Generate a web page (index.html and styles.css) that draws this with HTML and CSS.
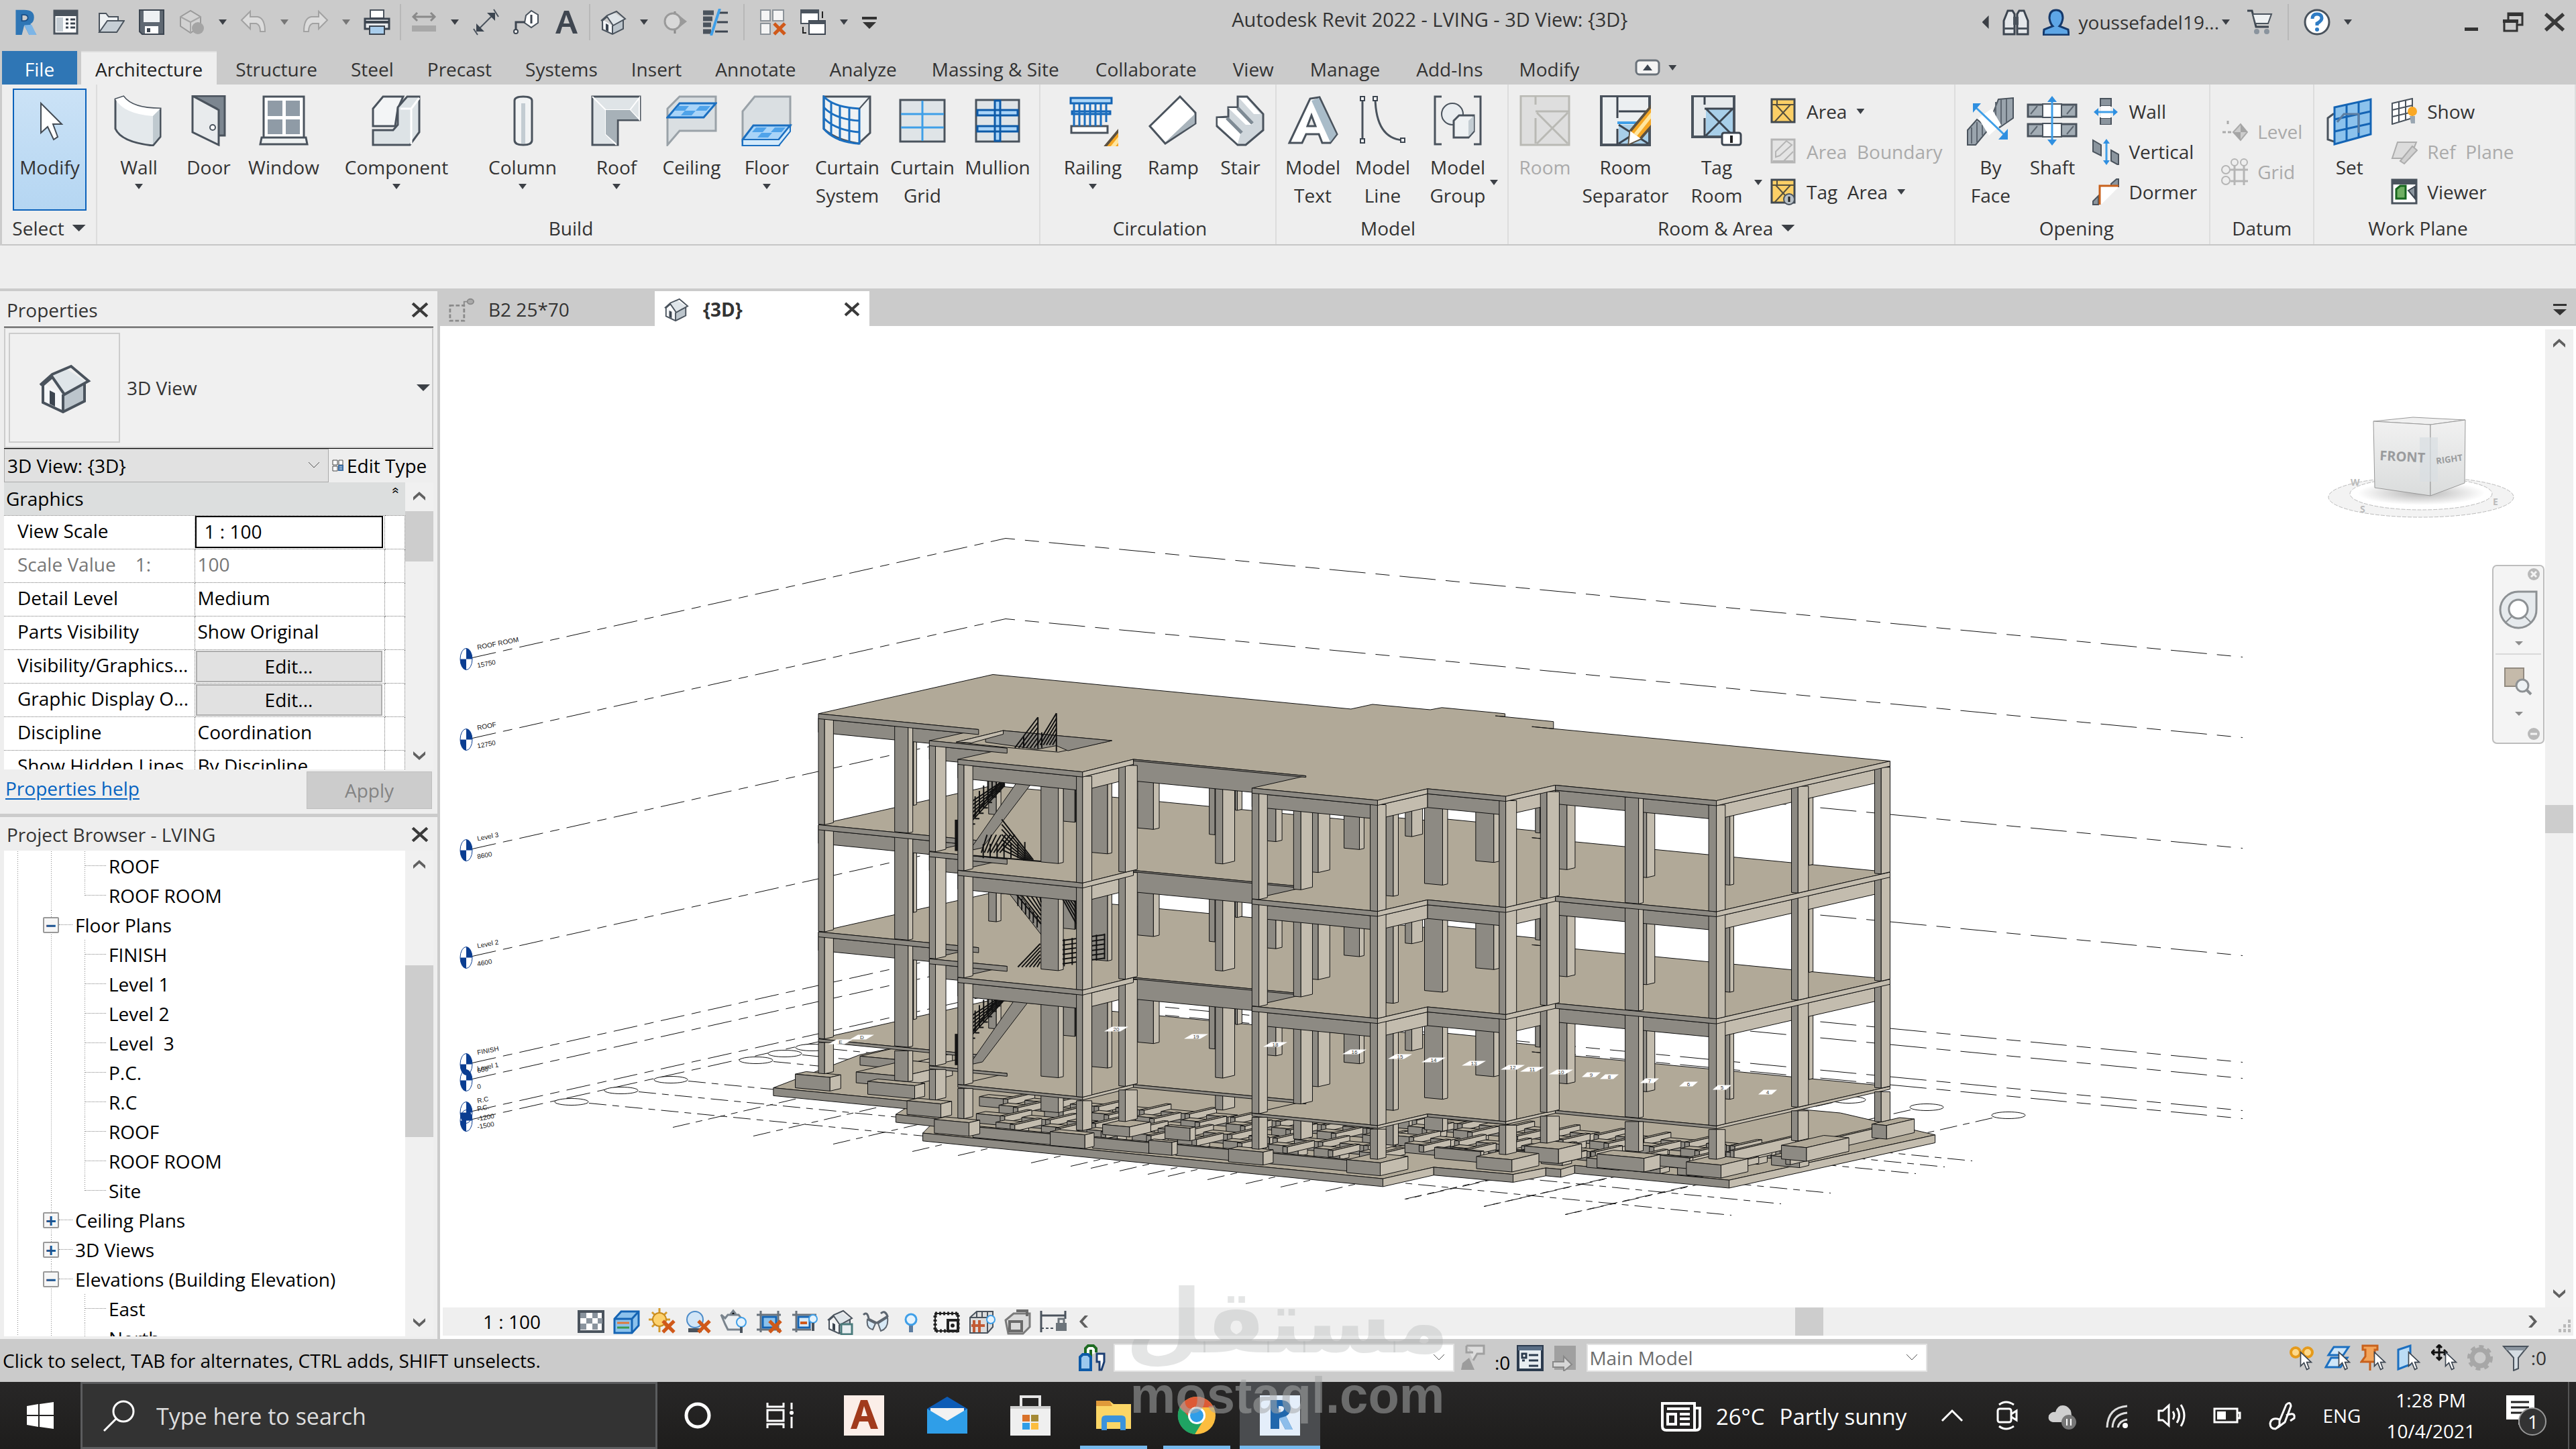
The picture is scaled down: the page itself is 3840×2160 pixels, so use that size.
FILE: index.html
```html
<!DOCTYPE html>
<html lang="en">
    <head>
        <meta charset="utf-8">
        <title>Autodesk Revit 2022 - LVING - 3D View: {3D}</title>
        <link rel="stylesheet" href="styles.css">
    </head>
    <body>
        <svg class="sprite" aria-hidden="true">
            <symbol id="house" viewBox="0 0 40 40">
                <path d="M5 17 19 25V37L6 31Z" fill="#f4f6f8"/><path d="M19 25 35 17V30L19 37Z" fill="#bcc5cc"/>
                <path d="M2 18 12 9 20 5 37 16 20 25 12 11 4 19Z" fill="#dfe5e9"/>
                <path d="M2 18 11 10 25 4 38 15 20 25 11 12 4 18V31L19 38 35 30V17M19 25V38" fill="none" stroke="#4a535d" stroke-width="2"/>
                <path d="M9 22 13 24V34L9 32Z" fill="#3c4550"/>
            </symbol>
            <symbol id="pencil" viewBox="0 0 40 40">
                <path d="M28 3 37 9 15 34 6 38 7 28Z" fill="#f5a623" stroke="#5b5142" stroke-width="2"/><path d="M31 6 11 31" stroke="#ffe6a0" stroke-width="3"/><path d="M28 3 37 9 33 14 24 8Z" fill="#c9651b"/><path d="M7 28 15 34 6 38Z" fill="#fff"/>
            </symbol>
            <symbol id="cross-x" viewBox="0 0 20 20"><path d="M2 2 18 18M18 2 2 18" stroke="#d0591a" stroke-width="5"/></symbol>
            <symbol id="chev-up" viewBox="0 0 24 24"><path d="M3 14 12 6 21 14V19L12 11 3 19Z" fill="#606060"/></symbol>
            <symbol id="close" viewBox="0 0 24 24"><path d="M2 3 22 21M22 3 2 21" stroke="#3a3a3a" stroke-width="4"/></symbol>
            <symbol id="pointer" viewBox="0 0 24 36"><path d="M3 2V27L9 21 14 33 18 31 14 20H22Z" fill="#fff" stroke="#3c4550" stroke-width="2"/></symbol>
            <symbol id="area" viewBox="0 0 40 40"><path d="M2 2H36V36H2Z" fill="#fbcf66" stroke="#3f4852" stroke-width="3"/><path d="M10 2V10M2 10H36M6 36 30 10M8 10 32 36" fill="none" stroke="#55503f" stroke-width="2"/></symbol>
        </svg>

        <header class="titlebar">
            <div class="quick">
                <svg class="ico" viewBox="0 0 40 44"><path d="M4 2H18Q34 2 34 14 34 22 28 25L38 43H26L18 27 14 43H4Z" fill="#2f76b5"/><path d="M14 10H18Q24 10 24 15 24 19 18 20H14Z" fill="#cbcbcb" stroke="#1c4f86" stroke-width="2"/><path d="M18 27 26 43H38L30 26Z" fill="#7db5e6"/></svg>
                <svg class="ico gap-r" viewBox="0 0 40 40"><path d="M3 3H37V37H3Z" fill="#fff" stroke="#4a535d" stroke-width="3"/><path d="M3 3H37V11H3Z" fill="#4a535d"/><path d="M6 13H16V34H6Z" fill="#c4ccd3"/><path d="M20 16H24M20 22H24M20 28H24M27 16H34M27 22H34M27 28H34" stroke="#3c4550" stroke-width="3"/></svg>
                <svg class="ico" viewBox="0 0 40 40"><path d="M2 35V7H12L16 12H30V18" fill="#eef1f3" stroke="#4a535d" stroke-width="2"/><path d="M2 35 14 18H39L28 35Z" fill="#c6ced5" stroke="#4a535d" stroke-width="2"/></svg>
                <svg class="ico" viewBox="0 0 40 40"><path d="M2 2H38V38H6L2 34Z" fill="#5f6872" stroke="#3c4550" stroke-width="2"/><path d="M8 3H32V20H8Z" fill="#eef1f3"/><path d="M10 26H30V37H10Z" fill="#fff"/><path d="M13 29H18V35H13Z" fill="#3c4550"/></svg>
                <svg class="ico" viewBox="0 0 40 40"><path d="M3 12 18 3 33 12V26L18 36 3 26Z" fill="#d2d2d2" stroke="#9a9a9a" stroke-width="2"/><path d="M3 12 18 20 33 12M18 20V36" fill="none" stroke="#a6a6a6" stroke-width="2"/><circle cx="29" cy="29" r="9" fill="#a4a4a4"/></svg>
                <i class="caret"></i>
                <svg class="ico" viewBox="0 0 40 40"><path d="M2 17 15 4V12H26Q37 14 37 34H30Q30 24 24 22H15V30Z" fill="#dcdcdc" stroke="#a2a2a2" stroke-width="2"/></svg>
                <i class="caret dim"></i>
                <svg class="ico" viewBox="0 0 40 40"><path d="M38 17 25 4V12H14Q3 14 3 34H10Q10 24 16 22H25V30Z" fill="#dcdcdc" stroke="#a2a2a2" stroke-width="2"/></svg>
                <i class="caret dim"></i>
                <svg class="ico" viewBox="0 0 40 40"><path d="M10 2H30V14H10Z" fill="#fff" stroke="#4a535d" stroke-width="2"/><path d="M2 15H38V30H2Z" fill="#e6e9ec" stroke="#3c4550" stroke-width="3"/><path d="M3 18H37V22H3Z" fill="#3c4550"/><path d="M9 26H31V38H9Z" fill="#a9cdec" stroke="#3c4550" stroke-width="2"/></svg>
                <i class="sep"></i>
                <svg class="ico" viewBox="0 0 40 40"><path d="M4 12H36M10 6 4 12 10 18M30 6 36 12 30 18" fill="none" stroke="#8a8a8a" stroke-width="3"/><path d="M2 25H38V34H2Z" fill="#a8a8a8"/></svg>
                <i class="caret"></i>
                <svg class="ico" viewBox="0 0 40 40"><path d="M8 32 32 8M2 30 8 39M32 1 39 12" stroke="#4a535d" stroke-width="2"/><path d="M6 34V22L18 34ZM34 6V18L22 6Z" fill="#3c4550"/></svg>
                <svg class="ico" viewBox="0 0 40 40"><path d="M20 10 28 3 38 9V21L28 28 18 21Z" fill="#fff" stroke="#4a535d" stroke-width="2"/><path d="M28 9V22M18 20H5V34" fill="none" stroke="#3c4550" stroke-width="3"/><circle cx="5" cy="34" r="3" fill="#fff" stroke="#3c4550" stroke-width="2"/></svg>
                <svg class="ico" viewBox="0 0 40 40"><path d="M4 37 17 3H24L37 37H30L26 27H14L11 37ZM16 22H25L20 9Z" fill="#3f4650"/></svg>
                <i class="sep"></i>
                <svg class="ico"><use href="#house"/></svg>
                <i class="caret"></i>
                <svg class="ico" viewBox="0 0 40 40"><path d="M20 4V37" stroke="#8a8a8a" stroke-width="3"/><path d="M20 5 38 19 20 33Z" fill="#9a9a9a"/><circle cx="17" cy="19" r="12" fill="#d8d8d8" stroke="#9a9a9a" stroke-width="3"/></svg>
                <svg class="ico" viewBox="0 0 40 40"><path d="M2 6H18M2 15H16M2 24H14M2 34H14" stroke="#4a535d" stroke-width="7"/><path d="M26 6H39M23 20H39M20 34H39" stroke="#3c4550" stroke-width="3"/><path d="M27 0 14 40" stroke="#3f9fe8" stroke-width="4"/></svg>
                <i class="sep last"></i>
                <svg class="ico" viewBox="0 0 40 40"><path d="M2 2H16V18H2ZM20 2H36V18H20ZM2 22H16V38H2Z" fill="#f5f5f5" stroke="#8c9399" stroke-width="2"/><svg x="20" y="20" width="20" height="20"><use href="#cross-x"/></svg></svg>
                <svg class="ico" viewBox="0 0 40 40"><path d="M2 2H28V22H2Z" fill="#fff" stroke="#4a535d" stroke-width="2"/><path d="M14 18H38V38H14Z" fill="#fff" stroke="#3c4550" stroke-width="2"/><path d="M2 2H28V7H2ZM14 18H38V23H14Z" fill="#4a535d"/><path d="M34 4V14M5 27V36H10" fill="none" stroke="#222" stroke-width="2"/></svg>
                <i class="caret"></i>
                <svg class="ico sm" viewBox="0 0 24 24"><path d="M1 4H23V8H1ZM2 12H22L12 22Z" fill="#333"/></svg>
            </div>
            <h1 class="title">Autodesk Revit 2022 - LVING - 3D View: {3D}</h1>
            <div class="account">
                <i class="caret left"></i>
                <svg class="ico" viewBox="0 0 40 40"><path d="M8 3H15L18 8V38H2V18ZM25 3H32L38 18V38H22V8Z" fill="#e4e7ea" stroke="#3c4550" stroke-width="3"/><path d="M16 12H24V24H16ZM2 28H18V31H2ZM22 28H38V31H22Z" fill="#4a535d"/></svg>
                <svg class="ico" viewBox="0 0 40 40"><path d="M20 2Q30 2 30 14 29 22 25 26L38 31 39 39H1L2 31 15 26Q11 22 10 14 10 2 20 2Z" fill="#5ea6e6" stroke="#15396b" stroke-width="3"/></svg>
                <span class="user">youssefadel19...</span><i class="caret tight"></i>
                <svg class="ico" viewBox="0 0 40 40"><path d="M2 3H9L15 27H34" fill="none" stroke="#3c4550" stroke-width="3"/><path d="M10 8H38L33 22H14Z" fill="#eef1f3" stroke="#4a535d" stroke-width="2"/><circle cx="16" cy="34" r="4" fill="#8a949e"/><circle cx="31" cy="34" r="4" fill="#8a949e"/></svg>
                <i class="sep wide"></i>
                <svg class="ico" viewBox="0 0 40 40"><circle cx="20" cy="20" r="18" fill="#fff" stroke="#4a535d" stroke-width="3"/><path d="M13 15Q13 8 20 8 27 8 27 14 27 18 20 22V25" fill="none" stroke="#2f7cc4" stroke-width="5"/><circle cx="20" cy="31" r="3" fill="#2f7cc4"/></svg>
                <i class="caret"></i>
            </div>
            <div class="winbtns">
                <button aria-label="Minimize"><svg viewBox="0 0 32 32"><path d="M6 24H26V29H6Z" fill="#333"/></svg></button>
                <button aria-label="Restore"><svg viewBox="0 0 32 32"><path d="M9 12V3H30V20H23" fill="none" stroke="#333" stroke-width="3"/><path d="M9 2H31V7H9ZM1 12H24V17H1Z" fill="#333"/><path d="M3 14H22V29H3Z" fill="none" stroke="#333" stroke-width="3"/></svg></button>
                <button aria-label="Close"><svg viewBox="0 0 24 24"><use href="#close"/></svg></button>
            </div>
        </header>

        <nav class="menu">
            <button class="file">File</button>
            <button class="active">Architecture</button>
            <button>Structure</button>
            <button>Steel</button>
            <button>Precast</button>
            <button>Systems</button>
            <button>Insert</button>
            <button>Annotate</button>
            <button>Analyze</button>
            <button>Massing &amp; Site</button>
            <button>Collaborate</button>
            <button>View</button>
            <button>Manage</button>
            <button>Add-Ins</button>
            <button>Modify</button>
            <button class="toggle" aria-label="Ribbon state"><svg viewBox="0 0 38 26"><rect x="2" y="2" width="34" height="21" rx="5" fill="#f4f4f4" stroke="#6a727a" stroke-width="3"/><path d="M12 17H26L19 8Z" fill="#3c4550"/></svg><i class="caret"></i></button>
        </nav>

        <section class="ribbon">
            <div class="panel">
                <div class="tools">
                    <button class="tool modify"><svg viewBox="0 0 76 76"><path d="M25 12V56L35 47 44 66 50 62 43 43H56Z" fill="#fff" stroke="#444c55" stroke-width="2"/></svg>Modify</button>
                </div>
                <h2>Select <i class="caret big"></i></h2>
            </div>
            <div class="panel build">
                <div class="tools">
                    <button class="tool w104"><svg viewBox="0 0 76 76"><path d="M3 6 15 2Q28 20 70 20V62L59 75Q12 70 3 50Z" fill="#e4e9ec" stroke="#4a535d" stroke-width="3"/><path d="M3 6 15 2Q28 20 70 20L59 31Q16 28 3 6Z" fill="#fff"/><path d="M59 31V73L69 61V21Z" fill="#bfc9cf"/></svg>Wall<i class="caret"></i></button>
                    <button class="tool w104"><svg viewBox="0 0 76 76"><path d="M14 1H62V60H50V20Z" fill="#7c8690" stroke="#4a535d" stroke-width="3"/><path d="M14 1 53 22V74L14 55Z" fill="#e8ebed" stroke="#4a535d" stroke-width="3"/><circle cx="44" cy="48" r="4" fill="#fff" stroke="#4a535d" stroke-width="2"/></svg>Door</button>
                    <button class="tool w120"><svg viewBox="0 0 76 76"><path d="M8 2H68V64H8Z" fill="#fff" stroke="#4a535d" stroke-width="3"/><path d="M14 8H36V31H14ZM41 8H62V31H41ZM14 36H36V58H14ZM41 36H62V58H41Z" fill="#8f9ba6"/><path d="M5 63H71L73 73H3Z" fill="#eef1f2" stroke="#4a535d" stroke-width="3"/></svg>Window</button>
                    <button class="tool w216"><svg viewBox="0 0 76 76"><path d="M3 20 18 2H48L40 20 36 46H3Z" fill="#f3f5f6" stroke="#4a535d" stroke-width="3"/><path d="M3 52H33L40 44V18L54 2H72V55L58 74H3Z" fill="#dde3e6" stroke="#4a535d" stroke-width="3"/><path d="M44 20H60L72 4M60 20V73" fill="none" stroke="#fff" stroke-width="3"/></svg>Component<i class="caret"></i></button>
                    <button class="tool w160"><svg viewBox="0 0 76 76"><path d="M26 8Q26 2 39 2 52 2 52 8V67Q52 74 39 74 26 74 26 67Z" fill="#f1f3f4" stroke="#4a535d" stroke-width="3"/><path d="M36 12H42V72H36Z" fill="#c3ccd2"/></svg>Column<i class="caret"></i></button>
                    <button class="tool w120"><svg viewBox="0 0 76 76"><path d="M2 2H73V37H40V74H2Z" fill="#dfe4e7" stroke="#4a535d" stroke-width="3"/><path d="M2 2 22 22V58L38 74M22 22H58L72 36V4L58 22" fill="none" stroke="#fff" stroke-width="2"/><path d="M22 22V58L38 72V36H71L58 22Z" fill="#a7b1b8"/></svg>Roof<i class="caret"></i></button>
                    <button class="tool w104"><svg viewBox="0 0 76 76"><path d="M2 20 20 2H74V53H20L2 74Z" fill="#dadfe2" stroke="#9aa2a8" stroke-width="3"/><path d="M20 12H74L56 33H2Z" fill="#a9d4f8" stroke="#1b6fc0" stroke-width="3"/><path d="M18 16H34L28 23H12ZM50 16H66L60 23H44ZM28 23H44L38 30H22Z" fill="#4fa3ea"/></svg>Ceiling</button>
                    <button class="tool w120"><svg viewBox="0 0 76 76"><path d="M2 24 20 2H73V46H20L2 66Z" fill="#dadfe2" stroke="#9aa2a8" stroke-width="3"/><path d="M18 45H73L56 66V75H2V66Z" fill="#a9d4f8" stroke="#1b6fc0" stroke-width="3"/><path d="M2 66H56L73 45V54L56 75H2Z" fill="#d3eafb" stroke="#1b6fc0" stroke-width="2"/><path d="M22 48H38L32 55H16ZM50 48H66L60 55H44ZM30 56H46L40 63H24Z" fill="#4fa3ea"/></svg>Floor<i class="caret"></i></button>
                    <button class="tool w120"><svg viewBox="0 0 76 76"><path d="M3 2H72V56L55 72Q20 66 3 50Z" fill="#eef2f4" stroke="#4a535d" stroke-width="3"/><path d="M3 2Q18 18 56 20V72Q20 70 3 50ZM14 10V60M27 16V68M41 19V71M3 18Q20 36 56 38M3 34Q20 52 56 55" fill="none" stroke="#1b6fc0" stroke-width="3"/><path d="M56 20 72 2" stroke="#4a535d" stroke-width="2"/></svg>Curtain<br>System</button>
                    <button class="tool w104"><svg viewBox="0 0 76 76"><path d="M5 7H71V69H5Z" fill="#dfe4e7" stroke="#4a535d" stroke-width="3"/><path d="M38 8V68M6 28H70M6 48H70" stroke="#3f9fe8" stroke-width="3"/></svg>Curtain<br>Grid</button>
                    <button class="tool w120"><svg viewBox="0 0 76 76"><path d="M6 7H70V69H6Z" fill="#dfe4e7" stroke="#4a535d" stroke-width="3"/><path d="M8 22H68V30H8ZM8 46H68V54H8ZM34 8H42V68H34Z" fill="#a9d4f8" stroke="#0d5aa8" stroke-width="3"/></svg>Mullion</button>
                </div>
                <h2>Build</h2>
            </div>
            <div class="panel circulation">
                <div class="tools">
                    <button class="tool w120"><svg viewBox="0 0 76 76"><path d="M6 46H60V56H6Z" fill="#fff" stroke="#4a535d" stroke-width="3"/><path d="M5 4H66V12H5ZM7 24H64V28H7Z" fill="#a9d4f8" stroke="#1464b4" stroke-width="3"/><path d="M10 12V46M18 12V46M26 12V46M34 12V46M42 12V46M50 12V46M58 12V40" stroke="#1b6fc0" stroke-width="3"/><svg x="34" y="34" width="40" height="42"><use href="#pencil"/></svg></svg>Railing<i class="caret"></i></button>
                    <button class="tool w120"><svg viewBox="0 0 76 76"><path d="M3 46 48 2 71 26V42L26 72Z" fill="#fff" stroke="#4a535d" stroke-width="3"/><path d="M26 70 70 28V42Z" fill="#a9b4bc"/></svg>Ramp</button>
                    <button class="tool w80"><svg viewBox="0 0 76 76"><path d="M3 33 20 32V18H34V2H48L72 28V52L46 74H34L3 46Z" fill="#d0d7dc" stroke="#4a535d" stroke-width="3"/><path d="M4 34H16L38 58 34 72 4 44ZM20 19H32L56 44H46ZM36 4H47L68 28H58Z" fill="#fff"/><path d="M18 34 40 56M34 19 56 42" stroke="#7e8a94" stroke-width="5"/></svg>Stair</button>
                </div>
                <h2>Circulation</h2>
            </div>
            <div class="panel model">
                <div class="tools">
                    <button class="tool w104"><svg viewBox="0 0 76 76"><path d="M3 71 34 5 48 3 74 58 64 71H52L47 58H28L22 71Z" fill="#fff" stroke="#4a535d" stroke-width="3"/><path d="M30 46H42L36 30Z" fill="#e8e8e8" stroke="#4a535d" stroke-width="3"/><path d="M36 8 47 4 73 58 64 70Z" fill="#a9bcc9"/></svg>Model<br>Text</button>
                    <button class="tool w104"><svg viewBox="0 0 76 76"><path d="M8 4V69M27 4Q28 64 68 67" fill="none" stroke="#4a535d" stroke-width="3"/><path d="M5 2H11V8H5ZM5 65H11V71H5ZM24 2H30V8H24ZM65 64H71V70H65Z" fill="#fff" stroke="#3c4550" stroke-width="2"/></svg>Model<br>Line</button>
                    <button class="tool w120"><svg viewBox="0 0 76 76"><path d="M14 2H4V73H14M62 2H72V73H62" fill="none" stroke="#4a535d" stroke-width="3"/><circle cx="30" cy="28" r="16" fill="#e9edf0" stroke="#4a535d" stroke-width="2"/><path d="M32 38 40 30H62V54L54 63H32Z" fill="#eef1f3" stroke="#4a535d" stroke-width="3"/><path d="M54 38V62L62 53V31Z" fill="#c3ccd2"/></svg>Model<i class="caret side"></i><br>Group</button>
                </div>
                <h2>Model</h2>
            </div>
            <div class="panel room">
                <div class="tools">
                    <button class="tool w104" disabled><svg viewBox="0 0 76 76"><path d="M2 1H74V74H2Z" fill="#dedede" stroke="#b9b9b4" stroke-width="3"/><path d="M24 2V14M24 34V72M24 24H74M26 26 72 72M72 26 26 72" fill="none" stroke="#b9b9b4" stroke-width="3"/></svg>Room</button>
                    <button class="tool w136"><svg viewBox="0 0 76 76"><path d="M2 1H74V74H2Z" fill="#eceff1" stroke="#4a535d" stroke-width="4"/><path d="M28 44H72V72H28Z" fill="#a8cfe9"/><path d="M26 2V34M26 50V74M28 24H74M28 44 72 72M72 44 28 72" stroke="#3c4550" stroke-width="3"/><path d="M26 41H74" stroke="#3f9fe8" stroke-width="4"/><svg x="32" y="0" width="44" height="42"><use href="#pencil"/></svg></svg>Room<br>Separator</button>
                    <button class="tool w136"><svg viewBox="0 0 76 76"><path d="M2 1H64V62H2Z" fill="#e6e9eb" stroke="#4a535d" stroke-width="4"/><path d="M22 20H62V60H22Z" fill="#a8cfe9"/><path d="M20 2V14M20 34V62M20 20H64M22 20 62 60M62 20 22 60" stroke="#3c4550" stroke-width="3"/><rect x="46" y="56" width="28" height="18" rx="3" fill="#fff" stroke="#3c4550" stroke-width="3"/><path d="M60 60V71" stroke="#222" stroke-width="4"/></svg>Tag<i class="caret side"></i><br>Room</button>
                    <div class="stack">
                        <button><svg viewBox="0 0 40 40"><use href="#area"/></svg>Area<i class="caret"></i></button>
                        <button disabled><svg viewBox="0 0 40 40"><path d="M2 2H36V36H2Z" fill="#e4e4e4" stroke="#b5b5b5" stroke-width="3"/><path d="M8 20 24 4 32 10 14 26 8 28ZM4 34H34M18 36 34 20" fill="none" stroke="#b5b5b5" stroke-width="2"/></svg>Area&nbsp; Boundary</button>
                        <button><svg viewBox="0 0 40 40"><use href="#area"/><circle cx="28" cy="31" r="8" fill="#b7bfc6" stroke="#4a535d" stroke-width="2"/><path d="M28 27V35" stroke="#222" stroke-width="3"/></svg>Tag&nbsp; Area<i class="caret"></i></button>
                    </div>
                </div>
                <h2>Room &amp; Area <i class="caret big"></i></h2>
            </div>
            <div class="panel opening">
                <div class="tools">
                    <button class="tool w104"><svg viewBox="0 0 76 76"><path d="M50 6 72 4V34L52 48 40 32ZM4 52 18 36 36 50 16 74H4Z" fill="#9aa4ad" stroke="#4a535d" stroke-width="2"/><path d="M46 10V38M54 6V44M62 6V40M10 48V72M18 40V70M26 44V60" stroke="#5d6670" stroke-width="2"/><path d="M20 34 40 20 54 44 36 60Z" fill="#fff"/><path d="M14 16 60 60" stroke="#3f9fe8" stroke-width="3"/><path d="M12 12H24L12 26ZM64 66H50L64 50Z" fill="#2f8fe0"/></svg>By<br>Face</button>
                    <button class="tool w80"><svg viewBox="0 0 76 76"><path d="M2 14H74V32H2ZM2 43H74V61H2Z" fill="#a3adb5" stroke="#4a535d" stroke-width="3"/><path d="M24 13H52V33H24ZM24 42H52V62H24Z" fill="#fff" stroke="#4a535d" stroke-width="2"/><path d="M38 6V70" stroke="#3f9fe8" stroke-width="3"/><path d="M31 10 38 1 45 10ZM31 66 38 75 45 66Z" fill="#2f8fe0"/><path d="M6 28 16 16M60 28 70 16M6 58 16 46M60 58 70 46" stroke="#5d6670" stroke-width="2"/></svg>Shaft</button>
                    <div class="stack">
                        <button><svg viewBox="0 0 40 40"><path d="M12 1H28V12H12ZM12 30H28V40H12Z" fill="#8b959e" stroke="#4a535d" stroke-width="2"/><path d="M13 12H27V30H13Z" fill="#fff"/><path d="M4 21H36" stroke="#3f9fe8" stroke-width="3"/><path d="M9 15 2 21 9 27ZM31 15 38 21 31 27Z" fill="#2f8fe0"/></svg>Wall</button>
                        <button><svg viewBox="0 0 40 40"><path d="M1 3 13 10V26L1 20ZM28 18 39 24V40L28 34Z" fill="#8b959e" stroke="#4a535d" stroke-width="2"/><path d="M21 4V36" stroke="#3f9fe8" stroke-width="3"/><path d="M16 8 21 1 26 8ZM16 33 21 40 26 33Z" fill="#2f8fe0"/></svg>Vertical</button>
                        <button><svg viewBox="0 0 40 40"><path d="M28 8 36 1H39V12H28ZM1 34 9 26V39H1Z" fill="#8b959e" stroke="#4a535d" stroke-width="2"/><path d="M14 38 38 14V12H12V38Z" fill="#fff"/><path d="M39 11H11V39" fill="none" stroke="#c8611c" stroke-width="3"/></svg>Dormer</button>
                    </div>
                </div>
                <h2>Opening</h2>
            </div>
            <div class="panel datum">
                <div class="tools">
                    <div class="stack">
                        <button disabled><svg viewBox="0 0 40 40"><path d="M10 4V12M2 21H24" stroke="#aaa" stroke-width="3" stroke-dasharray="5 3"/><path d="M18 21 29 9 39 21 29 33Z" fill="#ccc" stroke="#aaa" stroke-width="2"/><path d="M29 9 39 21H29V33L18 21H29Z" fill="#a5a5a5"/></svg>Level</button>
                        <button disabled><svg viewBox="0 0 40 40"><path d="M14 17H40M14 34H40M20 8V40M34 8V40" stroke="#b5b5b5" stroke-width="3"/><g fill="#eee" stroke="#b5b5b5" stroke-width="2"><circle cx="20" cy="6" r="5"/><circle cx="34" cy="6" r="5"/><circle cx="7" cy="17" r="6"/><circle cx="7" cy="33" r="6"/></g></svg>Grid</button>
                    </div>
                </div>
                <h2>Datum</h2>
            </div>
            <div class="panel workplane">
                <div class="tools">
                    <button class="tool w104"><svg viewBox="0 0 76 76"><path d="M6 34 14 28H50V60L18 70 6 66Z" fill="#eef1f3" stroke="#4a535d" stroke-width="3"/><path d="M16 18 70 6V58L16 73Z" fill="#8cc2ec" stroke="#1464b4" stroke-width="3"/><path d="M34 14V68M52 10V63M16 36 70 24M16 54 70 42" stroke="#1464b4" stroke-width="3"/><path d="M20 40 30 28H52V56" fill="none" stroke="#5c7da0" stroke-width="3"/></svg>Set</button>
                    <div class="stack">
                        <button><svg viewBox="0 0 40 40"><path d="M2 8 32 1V30L2 39ZM12 6V36M22 4V33M2 18 32 11M2 28 32 21" fill="#fff" stroke="#4a535d" stroke-width="2"/><circle cx="32" cy="20" r="7" fill="#f9a825"/><path d="M28 27H36V38H30Z" fill="#9aa7b2"/></svg>Show</button>
                        <button disabled><svg viewBox="0 0 40 40"><path d="M10 6H38L28 30H2Z" fill="#dcdcdc" stroke="#adadad" stroke-width="2"/><path d="M14 34 32 12 39 18 20 38Z" fill="#d0d0d0" stroke="#adadad" stroke-width="2"/></svg>Ref&nbsp; Plane</button>
                        <button><svg viewBox="0 0 40 40"><path d="M2 2H38V37H2Z" fill="#fff" stroke="#4a535d" stroke-width="3"/><path d="M2 2H38V9H2Z" fill="#4a535d"/><path d="M8 16 14 11H22V30H8Z" fill="#6fae62" stroke="#17661e" stroke-width="3"/><path d="M26 18 36 12V30Z" fill="#8b959e" stroke="#3c4550" stroke-width="2"/></svg>Viewer</button>
                    </div>
                </div>
                <h2>Work Plane</h2>
            </div>
        </section>
        <div class="options"></div>

        <main class="workspace">
            <aside class="dock">
                <section class="pane">
                    <header><h2>Properties</h2><button aria-label="Close properties"><svg viewBox="0 0 24 24"><use href="#close"/></svg></button></header>
                    <button class="type">
                        <span class="thumb"><svg viewBox="0 0 40 40"><use href="#house"/></svg></span>
                        <span>3D View</span>
                        <i class="caret wide"></i>
                    </button>
                    <div class="instance">
                        <select aria-label="Instance"><option>3D View: {3D}</option></select>
                        <button><svg viewBox="0 0 18 18"><path d="M1 1H8V8H1ZM10 1H16V8H10ZM1 10H8V17H1Z" fill="#fff" stroke="#444" stroke-width="1"/><path d="M9 8H17V17H9Z" fill="#3b6ea5"/><path d="M11 11H15M11 14H15" stroke="#fff" stroke-width="1"/></svg>Edit Type</button>
                    </div>
                    <div class="scrolled">
                        <div class="clip">
                            <table class="props">
                                <tr class="group"><th colspan="3">Graphics<span>&#xAB;</span></th></tr>
                                <tr><th><label for="scale">View Scale</label></th><td><input id="scale" value="1 : 100"></td><td></td></tr>
                                <tr class="off"><th>Scale Value &nbsp;&nbsp; 1:</th><td>100</td><td></td></tr>
                                <tr><th>Detail Level</th><td>Medium</td><td></td></tr>
                                <tr><th>Parts Visibility</th><td>Show Original</td><td></td></tr>
                                <tr><th>Visibility/Graphics...</th><td><button>Edit...</button></td><td></td></tr>
                                <tr><th>Graphic Display O...</th><td><button>Edit...</button></td><td></td></tr>
                                <tr><th>Discipline</th><td>Coordination</td><td></td></tr>
                                <tr><th>Show Hidden Lines</th><td>By Discipline</td><td></td></tr>
                            </table>
                        </div>
                        <div class="vscroll"><svg viewBox="0 0 24 24"><use href="#chev-up"/></svg><i class="bar bar-props"></i><svg class="down" viewBox="0 0 24 24"><use href="#chev-up"/></svg></div>
                    </div>
                    <footer><a href="#">Properties help</a><button disabled>Apply</button></footer>
                </section>
                <section class="pane browser">
                    <header><h2>Project Browser - LVING</h2><button aria-label="Close browser"><svg viewBox="0 0 24 24"><use href="#close"/></svg></button></header>
                    <div class="scrolled">
                        <div class="clip">
                            <ul class="tree">
                                <li><ul>
                                    <li><ul>
                                        <li><span>ROOF</span></li>
                                        <li><span>ROOF ROOM</span></li>
                                    </ul></li>
                                    <li><span><button aria-label="Collapse">&minus;</button>Floor Plans</span><ul>
                                        <li><span>FINISH</span></li>
                                        <li><span>Level 1</span></li>
                                        <li><span>Level 2</span></li>
                                        <li><span>Level&nbsp; 3</span></li>
                                        <li><span>P.C.</span></li>
                                        <li><span>R.C</span></li>
                                        <li><span>ROOF</span></li>
                                        <li><span>ROOF ROOM</span></li>
                                        <li><span>Site</span></li>
                                    </ul></li>
                                    <li><span><button aria-label="Expand">+</button>Ceiling Plans</span></li>
                                    <li><span><button aria-label="Expand">+</button>3D Views</span></li>
                                    <li><span><button aria-label="Collapse">&minus;</button>Elevations (Building Elevation)</span><ul>
                                        <li><span>East</span></li>
                                        <li><span>North</span></li>
                                    </ul></li>
                                </ul></li>
                            </ul>
                        </div>
                        <div class="vscroll"><svg viewBox="0 0 24 24"><use href="#chev-up"/></svg><i class="bar bar-tree"></i><svg class="down" viewBox="0 0 24 24"><use href="#chev-up"/></svg></div>
                    </div>
                </section>
            </aside>

            <section class="view">
                <div class="doctabs">
                    <button class="doctab"><svg viewBox="0 0 40 40"><path d="M2 14H24V38H2Z" fill="none" stroke="#8a8a8a" stroke-width="3" stroke-dasharray="6 3"/><path d="M24 14V8H30" fill="none" stroke="#8a8a8a" stroke-width="2"/><ellipse cx="34" cy="8" rx="5" ry="4" fill="#aaa" stroke="#8a8a8a" stroke-width="2"/></svg>B2 25*70</button>
                    <button class="doctab current"><svg viewBox="0 0 40 40"><use href="#house"/></svg>{3D}<svg class="x" viewBox="0 0 24 24"><use href="#close"/></svg></button>
                    <svg class="more" viewBox="0 0 24 24"><path d="M2 3H22V6H2ZM2 11H22L12 20Z" fill="#333"/></svg>
                </div>
                <div class="stage">
                    <div class="canvas">
                        <svg id="model" viewBox="656 486 3138 1462" role="img" aria-label="3D view of the building"></svg>
                        <svg class="cube" viewBox="3465 610 290 170">
                            <defs>
                                <linearGradient id="face" x2="0" y2="1"><stop stop-color="#f1f1f1"/><stop offset="1" stop-color="#dadcdc"/></linearGradient>
                                <radialGradient id="shade"><stop stop-color="#b5b5b5"/><stop offset="1" stop-color="#fff"/></radialGradient>
                            </defs>
                            <ellipse cx="3609" cy="741" rx="138" ry="30" fill="#f3f3f3" stroke="#bbb" stroke-dasharray="6 2"/>
                            <ellipse cx="3609" cy="736" rx="106" ry="24" fill="#fff" stroke="#bbb" stroke-dasharray="6 2"/>
                            <ellipse cx="3609" cy="735" rx="95" ry="18" fill="url(#shade)"/>
                            <path d="M3538 628 3597 622 3675 626 3623 633Z" fill="#f0f0f0" stroke="#999"/>
                            <path d="M3538 628 3623 633V739L3540 727Z" fill="url(#face)" stroke="#999"/>
                            <path d="M3623 633 3675 626 3674 720 3623 739Z" fill="url(#face)" stroke="#999"/>
                            <path d="M3607 652H3634V718H3607Z" fill="#d9dee2" opacity=".7"/>
                            <g class="cubetext">
                                <text x="3547" y="686" transform="rotate(3 3547 686)">FRONT</text>
                                <text class="narrow" x="3632" y="692" transform="rotate(-8 3632 692)">RIGHT</text>
                                <text class="compass" x="3518" y="764">S</text><text class="compass" x="3716" y="753">E</text><text class="compass" x="3504" y="724">W</text>
                            </g>
                        </svg>
                        <svg class="navbar" viewBox="0 0 78 267">
                            <rect x="1" y="1" width="76" height="265" rx="6" fill="#f4f4f4" stroke="#bdbdbd" stroke-width="2"/>
                            <circle cx="62" cy="14" r="9" fill="#b9b9b9"/><path d="M58 10 66 18M66 10 58 18" stroke="#f4f4f4" stroke-width="3"/>
                            <path d="M39 40H66V66A27 27 0 1 1 39 40Z" fill="#e6eaed" stroke="#8d9194" stroke-width="3"/><circle cx="39" cy="66" r="14" fill="#fff" stroke="#8d9194" stroke-width="3"/><path d="M29 77 20 86M49 77 58 86" stroke="#8d9194" stroke-width="2"/>
                            <path d="M34 114H46L40 120ZM34 219H46L40 225Z" fill="#8d8d8d"/><path d="M5 133H73" stroke="#bdbdbd" stroke-width="1"/>
                            <path d="M19 154H47V181H19Z" fill="#c5baaa" stroke="#918a80" stroke-width="2"/><circle cx="45" cy="180" r="9" fill="#eef2f4" stroke="#8d9194" stroke-width="3"/><path d="M51 186 58 193" stroke="#8d9194" stroke-width="4"/>
                            <circle cx="62" cy="252" r="9" fill="#b9b9b9"/><path d="M57 252H67" stroke="#f4f4f4" stroke-width="3"/>
                        </svg>
                    </div>
                    <div class="vscroll"><svg viewBox="0 0 24 24"><use href="#chev-up"/></svg><i class="bar bar-view"></i><svg class="down" viewBox="0 0 24 24"><use href="#chev-up"/></svg></div>
                </div>
                <div class="viewbar">
                    <span class="ratio">1 : 100</span>
                    <svg class="ico" viewBox="0 0 40 40"><path d="M2 5H38V35H2Z" fill="#fff" stroke="#4a535d" stroke-width="4"/><path d="M4 7H13V15H4ZM22 7H30V15H22ZM13 15H22V23H13ZM30 15H37V23H30ZM4 23H13V32H4ZM22 23H30V32H22Z" fill="#8a949e"/></svg>
                    <svg class="ico" viewBox="0 0 40 40"><path d="M2 16 12 5H38V26L28 37H2Z" fill="#8cc2ec" stroke="#1464b4" stroke-width="3"/><path d="M2 16H28V37M28 16 38 5" fill="none" stroke="#1464b4" stroke-width="3"/><path d="M6 22H24" stroke="#e07b39" stroke-width="3"/><path d="M6 29H24" stroke="#3d9a50" stroke-width="3"/></svg>
                    <svg class="ico" viewBox="0 0 40 40"><path d="M16 0V36M0 17H32M5 6 27 28M27 6 5 28" stroke="#d59a2b" stroke-width="3"/><circle cx="16" cy="17" r="10" fill="#fdd26e" stroke="#c98b1d" stroke-width="2"/><svg x="19" y="17" width="21" height="21"><use href="#cross-x"/></svg></svg>
                    <svg class="ico" viewBox="0 0 40 40"><circle cx="16" cy="17" r="12" fill="#d2e6f7" stroke="#4d8cc9" stroke-width="2"/><path d="M6 33H26" stroke="#4a535d" stroke-width="6"/><svg x="19" y="17" width="21" height="21"><use href="#cross-x"/></svg></svg>
                    <svg class="ico" viewBox="0 0 40 40"><path d="M2 10 8 15 12 10H28L32 15V32H12L8 24Z" fill="#eef1f3" stroke="#7a848d" stroke-width="3"/><path d="M16 9 20 4 24 9" stroke="#7a848d" stroke-width="3"/><circle cx="32" cy="21" r="7" fill="#e5f3fd" stroke="#3f9fe8" stroke-width="2"/><path d="M32 28V37" stroke="#4a535d" stroke-width="4"/></svg>
                    <svg class="ico" viewBox="0 0 40 40"><path d="M8 4V36M2 10H38M34 4V36M2 32H38" stroke="#6a737c" stroke-width="3"/><path d="M11 13H31V29H11Z" fill="#8cc2ec" stroke="#1464b4" stroke-width="3"/><svg x="19" y="17" width="21" height="21"><use href="#cross-x"/></svg></svg>
                    <svg class="ico" viewBox="0 0 40 40"><path d="M8 4V36M2 10H38M2 32H30" stroke="#6a737c" stroke-width="3"/><path d="M11 13H28V29H11Z" fill="#d5e8f7" stroke="#1464b4" stroke-width="3"/><path d="M14 22H24" stroke="#d0591a" stroke-width="4"/><circle cx="33" cy="16" r="6" fill="#e5f3fd" stroke="#3f9fe8" stroke-width="2"/><path d="M33 22V34" stroke="#4a535d" stroke-width="4"/></svg>
                    <svg class="ico" viewBox="0 0 40 40"><use href="#house"/><path d="M22 24H38V39H22Z" fill="#e8eef1" stroke="#4a7b7c" stroke-width="3"/></svg>
                    <svg class="ico" viewBox="0 0 40 40"><path d="M2 10Q8 4 10 16L22 22 38 12Q34 2 28 8" fill="none" stroke="#5d6670" stroke-width="3"/><path d="M8 17 20 23 16 32Q6 30 8 17ZM24 23 38 14Q40 30 28 34Z" fill="#d7e9f6" stroke="#5d6670" stroke-width="2"/></svg>
                    <svg class="ico" viewBox="0 0 40 40"><circle cx="20" cy="17" r="8" fill="#e5f3fd" stroke="#3f9fe8" stroke-width="3"/><path d="M17 26H23V36H17Z" fill="#5d7da0"/></svg>
                    <svg class="ico" viewBox="0 0 40 40"><path d="M3 8H37V34H3Z" fill="#f4f4f4" stroke="#222" stroke-width="2"/><path d="M3 8H37V34H3Z" fill="none" stroke="#222" stroke-width="5" stroke-dasharray="3 3"/><path d="M22 18H37V34H22Z" fill="#fff" stroke="#222" stroke-width="4"/><circle cx="29" cy="26" r="3" fill="#222"/></svg>
                    <svg class="ico" viewBox="0 0 40 40"><path d="M2 14 12 5H36V28L28 37H2Z" fill="#ddd" stroke="#4a535d" stroke-width="2"/><path d="M8 18V36M16 18V36M4 26H24" stroke="#c25b35" stroke-width="4"/><path d="M12 5V15M20 5V15M28 5V15M2 14H28V37" fill="none" stroke="#4a535d" stroke-width="2"/><circle cx="33" cy="17" r="6" fill="#e5f3fd" stroke="#3f9fe8" stroke-width="2"/></svg>
                    <svg class="ico" viewBox="0 0 40 40"><path d="M2 18 14 8H38V28L28 38H6Z" fill="#d9d9d9" stroke="#7a7a7a" stroke-width="3"/><path d="M8 20H26V34H8ZM18 4H34V12" fill="none" stroke="#6a6a6a" stroke-width="4"/></svg>
                    <svg class="ico" viewBox="0 0 40 40"><path d="M2 4V36M38 4V16M2 11H38" stroke="#4a535d" stroke-width="3"/><path d="M2 30H22" stroke="#4a535d" stroke-width="2" stroke-dasharray="4 3"/><path d="M24 22H40V34H24Z" fill="#6c747b"/><path d="M28 22V16H36V22" fill="none" stroke="#6c747b" stroke-width="3"/></svg>
                    <div class="hscroll">
                        <svg class="back" viewBox="0 0 24 24"><use href="#chev-up"/></svg><i class="bar"></i><svg class="fwd" viewBox="0 0 24 24"><use href="#chev-up"/></svg>
                    </div>
                    <svg class="grip" viewBox="0 0 20 20"><path d="M15 0H19V5H15ZM8 7H12V12H8ZM15 7H19V12H15ZM1 14H5V19H1ZM8 14H12V19H8ZM15 14H19V19H15Z" fill="#b9b9b9"/></svg>
                </div>
            </section>
        </main>

        <div class="status">
            <p>Click to select, TAB for alternates, CTRL adds, SHIFT unselects.</p>
            <svg class="ico" viewBox="0 0 40 40"><path d="M10 20V6L14 2H22L26 6V12M18 8V20" fill="#fff" stroke="#1e6b22" stroke-width="4"/><path d="M2 19 6 15H14L18 19V38H2Z" fill="#9cc8ee" stroke="#0d5aa8" stroke-width="4"/><path d="M27 14H38V26L34 38H31V26H27Z" fill="#fff" stroke="#1c3f74" stroke-width="3"/></svg>
            <select aria-label="Active workset"><option></option></select>
            <svg class="ico" viewBox="0 0 40 40"><path d="M10 2H36V14H26L20 24M10 2V12H20" fill="#ddd" stroke="#a0a0a0" stroke-width="3"/><path d="M4 28 14 20 22 38H2Z" fill="#9c9c9c"/></svg>
            <span class="count low">:0</span>
            <svg class="ico" viewBox="0 0 40 40"><path d="M2 3H38V38H2Z" fill="#e8edf1" stroke="#2c3b4e" stroke-width="4"/><path d="M2 3H38V9H2Z" fill="#5a6e85"/><path d="M8 14H14V20H8ZM18 16H32M18 24H32M18 32H32M8 24H12" fill="#fff" stroke="#2c3b4e" stroke-width="3"/></svg>
            <svg class="ico" viewBox="0 0 40 40"><path d="M4 2H36V38H4Z" fill="#a0a0a0"/><path d="M2 26H18V18L30 30 18 40V34H2Z" fill="#d6d6d6" stroke="#888" stroke-width="2"/></svg>
            <select aria-label="Design option" class="option"><option>Main Model</option></select>
            <div class="picks">
                <svg class="ico" viewBox="0 0 40 40"><circle cx="10" cy="12" r="7" fill="#fdd98c" stroke="#e59a1b" stroke-width="4"/><circle cx="28" cy="12" r="7" fill="#fdd98c" stroke="#e59a1b" stroke-width="4"/><svg x="14" y="10" width="22" height="30"><use href="#pointer"/></svg></svg>
                <svg class="ico" viewBox="0 0 40 40"><path d="M14 4H36L28 16H6ZM10 20H34L24 34H2Z" fill="#cfe6f8" stroke="#1b6fc0" stroke-width="3"/><svg x="18" y="10" width="22" height="30"><use href="#pointer"/></svg></svg>
                <svg class="ico" viewBox="0 0 40 40"><path d="M4 2H26V8H22V18L28 26H2L8 18V8H4ZM15 26V39" fill="#f3a45a" stroke="#c8611c" stroke-width="3"/><svg x="18" y="10" width="22" height="30"><use href="#pointer"/></svg></svg>
                <svg class="ico" viewBox="0 0 40 40"><path d="M4 8 22 2V30L4 37Z" fill="#bcdcf5" stroke="#1b6fc0" stroke-width="3"/><svg x="16" y="10" width="22" height="30"><use href="#pointer"/></svg></svg>
                <svg class="ico" viewBox="0 0 40 40"><path d="M12 2V22M2 12H22M8 5 12 1 16 5M8 19 12 23 16 19M5 8 1 12 5 16M19 8 23 12 19 16" fill="none" stroke="#111" stroke-width="3"/><svg x="18" y="10" width="22" height="30"><use href="#pointer"/></svg></svg>
                <svg class="ico" viewBox="0 0 40 40"><circle cx="20" cy="20" r="12" fill="none" stroke="#a7a7a7" stroke-width="7"/><circle cx="20" cy="20" r="17" fill="none" stroke="#a7a7a7" stroke-width="4" stroke-dasharray="7 6"/></svg>
                <svg class="ico" viewBox="0 0 40 40"><path d="M2 3H38L24 20V36L17 39V20Z" fill="#d5dde3" stroke="#4a535d" stroke-width="2"/><path d="M4 4H36L33 9H7Z" fill="#8a949e"/></svg>
                <span class="count">:0</span>
            </div>
        </div>

        <footer class="taskbar">
            <button class="start" aria-label="Start"><svg viewBox="0 0 40 40"><path d="M0 6 17 3V19H0ZM19 3 40 0V19H19ZM0 21H17V37L0 34ZM19 21H40V40L19 37Z" fill="#fff"/></svg></button>
            <label class="search"><svg viewBox="0 0 48 48"><circle cx="31" cy="17" r="15" fill="none" stroke="#fff" stroke-width="3"/><path d="M20 28 2 46" stroke="#fff" stroke-width="3"/></svg><input type="text" aria-label="Search" placeholder="Type here to search"></label>
            <div class="apps">
                <button aria-label="Cortana"><svg viewBox="0 0 60 60"><circle cx="30" cy="30" r="17" fill="none" stroke="#fff" stroke-width="5"/></svg></button>
                <button aria-label="Task view"><svg viewBox="0 0 60 60"><path d="M10 11V17H34V11M10 49V43H34V49M10 22H34V38H10ZM46 11V21M46 32V49" fill="none" stroke="#fff" stroke-width="3"/><circle cx="46" cy="26" r="3" fill="#fff"/></svg></button>
                <button aria-label="AutoCAD"><svg viewBox="0 0 60 60"><path d="M0 0H60V60H0Z" fill="#fbeee8"/><path d="M10 50 25 7H35L51 50H40L36 39H23L19 50ZM26 31H35L30 16Z" fill="#a13a1c"/></svg></button>
                <button aria-label="Mail"><svg viewBox="0 0 60 60"><path d="M0 20 30 2 60 20V30H0Z" fill="#0d5cb6"/><path d="M5 19H55V34L30 44 5 34Z" fill="#f2f2f2"/><path d="M0 20 30 38 60 20V57H0Z" fill="#2f9ee8"/></svg></button>
                <button aria-label="Store"><svg viewBox="0 0 60 60"><path d="M16 18V2H44V18" fill="none" stroke="#e6e6e6" stroke-width="4"/><path d="M0 16H60V60H0Z" fill="#efefef"/><path d="M0 16H60V20H0Z" fill="#ccc"/><path d="M18 29H29V39H18Z" fill="#d9722a"/><path d="M31 29H42V39H31Z" fill="#a58a35"/><path d="M18 41H29V51H18Z" fill="#2f9ee8"/><path d="M31 41H42V51H31Z" fill="#fcbd3f"/></svg></button>
                <button aria-label="File Explorer" class="run"><svg viewBox="0 0 60 60"><path d="M4 8H24L30 13H56V50H4Z" fill="#fbd666"/><path d="M4 8H24L28 16H4Z" fill="#e09a3a"/><path d="M12 52V36Q12 30 18 30H42Q48 30 48 36V52H40V40H20V52Z" fill="#3a93dc"/></svg></button>
                <button aria-label="Chrome" class="run"><svg viewBox="0 0 60 60"><circle cx="30" cy="30" r="28" fill="#fcbd3f"/><path d="M30 30 5 17A28 28 0 0 0 27 58L42 34Z" fill="#1fa463"/><path d="M5 17A28 28 0 0 1 55 18H30L18 32Z" fill="#dd5a35"/><circle cx="30" cy="30" r="13" fill="#fff"/><circle cx="30" cy="30" r="10" fill="#2f9ee8"/></svg></button>
                <button aria-label="Revit" class="run focus"><svg viewBox="0 0 60 60"><path d="M0 0H60V60H0Z" fill="#e4eefa"/><path d="M16 7H32Q46 8 46 20 45 28 39 31L49 51H38L29 34V50H16ZM28 16V25H31Q36 24 36 20 36 16 31 16Z" fill="#2167ac"/><path d="M29 34 38 51H49L39 31Z" fill="#8dbdea"/></svg></button>
            </div>
            <div class="tray">
                <button class="weather"><svg viewBox="0 0 60 44"><path d="M2 2H50V42H8Q2 42 2 36ZM50 9H58V36Q58 42 52 42" fill="none" stroke="#fff" stroke-width="4"/><path d="M9 10H43M28 18H43M28 25H43M28 33H43" stroke="#fff" stroke-width="4"/><path d="M10 18H22V33H10Z" fill="none" stroke="#fff" stroke-width="4"/></svg><span>26&deg;C</span><span>Partly sunny</span></button>
                <svg viewBox="0 0 44 44"><path d="M7 30 22 15 37 30" fill="none" stroke="#fff" stroke-width="3"/></svg>
                <svg viewBox="0 0 44 44"><rect x="8" y="12" width="20" height="20" rx="3" fill="none" stroke="#fff" stroke-width="3"/><path d="M28 20 36 15V29L28 24M10 6Q20-2 32 6M10 38Q20 46 32 38" fill="none" stroke="#fff" stroke-width="3"/></svg>
                <svg viewBox="0 0 44 44"><path d="M8 32Q0 30 2 22 6 16 12 17 16 4 28 8 36 12 36 22V32Z" fill="#cfcfcf"/><circle cx="32" cy="32" r="11" fill="#777"/><path d="M29 27V37M35 27V37" stroke="#fff" stroke-width="2"/></svg>
                <svg viewBox="0 0 44 44"><path d="M7 40Q8 10 37 8M15 40Q16 20 37 18M23 40Q25 30 37 28" fill="none" stroke="#ddd" stroke-width="3"/><circle cx="34" cy="37" r="4" fill="#fff"/></svg>
                <svg viewBox="0 0 44 44"><path d="M2 15H8L17 7V37L8 29H2ZM23 16Q27 22 23 28M29 11Q36 22 29 33M35 6Q45 22 35 38" fill="none" stroke="#fff" stroke-width="3"/></svg>
                <svg viewBox="0 0 44 44"><path d="M3 12H37V32H3ZM37 18H41V26H37" fill="none" stroke="#fff" stroke-width="3"/><path d="M7 16H20V28H7Z" fill="#fff"/></svg>
                <svg viewBox="0 0 44 44"><path d="M18 30 28 6Q34 0 35 8L26 32 18 38ZM18 28Q6 24 4 34 4 42 12 42 16 40 18 36M28 22Q42 16 40 26L34 30" fill="none" stroke="#fff" stroke-width="3"/></svg>
                <span class="lang">ENG</span>
                <time>1:28 PM<br>10/4/2021</time>
                <button class="notes" aria-label="Notifications"><svg viewBox="0 0 60 60"><path d="M0 0H42V36H28L18 44V36H0Z" fill="#fff"/><path d="M7 10H34M7 18H34M7 26H24" stroke="#222" stroke-width="3"/><circle cx="39" cy="39" r="20" fill="#333" stroke="#999" stroke-width="2"/><text x="32" y="50">1</text></svg></button>
            </div>
        </footer>

        <div class="watermark" aria-hidden="true"><span lang="ar">مستقل</span><b>mostaql.com</b></div>
        <script src="model.js"></script>
    </body>
</html>
```
FILE: styles.css
```css
:root {
    --chrome: #cbcbcb;
    --panel: #eee;
    --ink: #333;
}
* {
    box-sizing: border-box;
}
body {
    margin: 0;
    height: 100vh;
    display: flex;
    flex-direction: column;
    overflow: hidden;
    background: var(--chrome);
    color: var(--ink);
    font: 28px/40px "Open Sans", "Noto Sans", sans-serif;
}
h1, h2, p, ul {
    margin: 0;
    padding: 0;
    font-size: inherit;
    font-weight: normal;
}
button, input, select {
    font: inherit;
    color: inherit;
    border: 0;
    padding: 0;
    background: none;
}
svg {
    display: block;
    flex: none;
}
.sprite {
    position: absolute;
    width: 0;
    height: 0;
}
.ico {
    width: 40px;
    height: 40px;
}
.ico.sm {
    width: 24px;
    height: 24px;
}
.caret {
    flex: none;
    display: inline-block;
    width: 12px;
    height: 8px;
    background: #3c4046;
    clip-path: polygon(0 0, 100% 0, 50% 100%);
}
.caret.dim { background: #777; }
.caret.big { width: 20px; height: 10px; }
.caret.wide { width: 20px; height: 10px; margin-left: auto; }
.caret.left { width: 10px; height: 20px; clip-path: polygon(100% 0, 100% 100%, 0 50%); }

/* title bar */
.titlebar {
    display: flex;
    align-items: center;
    height: 76px;
    flex: none;
    padding: 0 16px 10px 18px;
}
.quick, .account, .winbtns {
    display: flex;
    align-items: center;
    gap: 20px;
}
.quick .sep, .account .sep {
    width: 2px;
    height: 54px;
    margin: 0 -6px;
    background: #b8b8b8;
}
.quick .sep.last, .account .sep.wide { margin: 0 2px; }
.gap-r { margin-right: 8px; }
.title {
    flex: 1;
    text-align: center;
    padding-bottom: 8px;
    font-size: 29px;
}
.user { margin: 0 -16px 0 -6px; }
.caret.tight { margin-right: 4px; }
.winbtns {
    margin-left: 162px;
    gap: 30px;
}
.winbtns button, .winbtns svg {
    width: 32px;
    height: 32px;
}

/* ribbon tabs */
.menu {
    display: flex;
    flex: none;
    height: 50px;
    padding-left: 3px;
}
.menu button {
    padding: 4px 25px 0;
    height: 50px;
}
.menu .file {
    width: 112px;
    margin-right: 6px;
    background: #2f76b5;
    color: #fff;
}
.menu .active {
    background: var(--panel);
    color: #222;
    padding: 2px 21px 0;
    border-top: 2px solid #ddd;
}
.menu .active + button { padding-left: 28px; }
.menu button:nth-child(n + 10) { padding: 4px 27px 0; }
.menu .toggle:last-child {
    display: flex;
    align-items: center;
    gap: 12px;
    padding: 0 0 0 56px;
}
.toggle svg {
    width: 38px;
    height: 26px;
}

/* ribbon */
.ribbon {
    display: flex;
    flex: none;
    height: 240px;
    margin-left: 3px;
    background: var(--panel);
    border-bottom: 2px solid #c6c6c6;
}
.panel {
    display: flex;
    flex-direction: column;
    border-right: 2px solid #ddd;
}
.panel h2 {
    display: flex;
    align-items: center;
    justify-content: center;
    gap: 12px;
    height: 48px;
}
.tools {
    display: flex;
    align-items: flex-start;
    height: 190px;
}
.tool {
    position: relative;
    padding-top: 16px;
    line-height: 42px;
    white-space: nowrap;
    text-align: center;
}
.tool svg {
    width: 76px;
    height: 76px;
    margin: 0 auto 10px;
}
.tool .caret {
    display: block;
    margin: 4px auto;
}
.tool .caret.side {
    position: absolute;
    right: 0;
    bottom: 36px;
    margin: 0;
}
.w80 { width: 80px; }
.w104 { width: 104px; }
.w120 { width: 120px; }
.w136 { width: 136px; }
.w160 { width: 160px; }
.w216 { width: 216px; }
.modify {
    width: 110px;
    margin: 6px 14px 0 16px;
    padding: 8px 0 42px;
    background: linear-gradient(#cbe2f6, #b5d6f2);
    border: 2px solid #0b62bb;
}
button:disabled { color: #aaa; }
.stack {
    display: flex;
    flex-direction: column;
    padding-top: 10px;
}
.stack button {
    display: flex;
    align-items: center;
    gap: 14px;
    height: 60px;
    white-space: nowrap;
}
.stack svg {
    width: 40px;
    height: 40px;
}
.build { padding: 0 2px 0 10px; }
.circulation { padding: 0 12px 0 18px; }
.model { padding: 0 14px 0 2px; }
.room { padding: 0 18px 0 2px; }
.room .stack { padding-left: 12px; }
.opening .stack { padding-left: 20px; }
.opening { padding-right: 18px; }
.datum { padding: 0 16px; }
.datum .stack { padding-top: 40px; }
.workplane .stack { padding-left: 10px; }
.workplane { flex: 1; }
.workplane h2 { justify-content: flex-start; padding-left: 80px; }
.options {
    flex: none;
    height: 64px;
    background: var(--panel);
}

/* docked panes */
.workspace {
    display: flex;
    flex: 1;
    min-height: 0;
    padding-top: 4px;
}
.dock {
    display: grid;
    grid-template-rows: 1fr 1fr;
    gap: 5px;
    width: 652px;
    flex: none;
}
.pane {
    display: flex;
    flex-direction: column;
    min-height: 0;
    background: var(--panel);
    padding: 0 6px;
}
.pane header {
    display: flex;
    justify-content: space-between;
    align-items: center;
    flex: none;
    height: 53px;
    padding: 2px 4px 0;
}
.pane header svg {
    width: 26px;
    height: 26px;
    margin-right: 3px;
}
.type {
    display: flex;
    align-items: center;
    gap: 10px;
    height: 182px;
    flex: none;
    padding: 8px 5px;
    border: solid #000;
    border-width: 1px 0;
    box-shadow: inset 0 0 0 2px #ccc;
    background: #f0f0f0;
}
.type .thumb {
    display: grid;
    place-items: center;
    width: 166px;
    height: 164px;
    margin-left: 2px;
    border: 2px solid #ccc;
}
.thumb svg {
    width: 80px;
    height: 80px;
}
.instance {
    display: flex;
    height: 50px;
    flex: none;
    color: #000;
}
.instance button {
    display: flex;
    align-items: center;
    gap: 4px;
    padding-left: 5px;
    white-space: nowrap;
}
.instance svg {
    width: 18px;
    height: 18px;
}
select {
    appearance: none;
    border: 1px solid #aaa;
    padding: 0 4px;
    color: #000;
    background: #e1e1e1 url("data:image/svg+xml,%3Csvg xmlns='http://www.w3.org/2000/svg' viewBox='0 0 18 12'%3E%3Cpath d='M1 1 9 9 17 1' fill='none' stroke='%23555' stroke-width='1'/%3E%3C/svg%3E") no-repeat right 12px center / 18px 12px;
}
.instance select { width: 484px; }
.scrolled {
    display: flex;
    flex: 1;
    min-height: 0;
}
.clip {
    flex: 1;
    overflow: hidden;
    background: #fff;
    color: #000;
}
.props {
    width: 100%;
    border-collapse: collapse;
    line-height: 44px;
}
.props th, .props td {
    height: 50px;
    padding: 0 4px;
    border: 1px dotted #777;
    border-left: 0;
    font-weight: normal;
    text-align: left;
    vertical-align: top;
    white-space: nowrap;
    overflow: hidden;
}
.props th { width: 284px; padding: 0 0 0 20px; }
.props td + td { width: 30px; }
.props .group th {
    width: auto;
    height: 49px;
    padding: 2px 0 0 3px;
    border: 0;
    background: #dcdede;
}
.props .group span {
    float: right;
    margin: -12px 8px 0 0;
    font-size: 20px;
    transform: rotate(90deg);
}
.props .off { color: #777; }
.props input {
    display: block;
    width: 280px;
    height: 48px;
    margin: 0 -4px;
    padding: 0 12px 2px;
    border: 2px solid #000;
    background: #fff;
}
.props button {
    display: block;
    width: 278px;
    height: 47px;
    margin: 1px -3px 0;
    background: #e1e1e1;
    border: 2px solid #adadad;
    line-height: 42px;
}
.vscroll {
    display: flex;
    flex-direction: column;
    align-items: center;
    width: 42px;
    flex: none;
    background: #f0f0f0;
}
.vscroll svg {
    width: 24px;
    height: 24px;
    margin: 8px 0 11px;
}
.vscroll .down {
    margin: auto 0 8px;
    transform: rotate(180deg);
}
.bar {
    display: block;
    width: 100%;
    background: #cdcdcd;
}
.bar-props { height: 75px; }
.bar-tree { height: 256px; margin-top: 128px; }
.bar-view { height: 42px; margin-top: 666px; }
.pane footer {
    display: flex;
    justify-content: space-between;
    align-items: flex-start;
    flex: none;
    height: 66px;
    padding: 3px 2px 0 2px;
}
.pane footer a {
    color: #0563c1;
    text-underline-offset: 4px;
    line-height: 50px;
}
.pane footer button {
    width: 187px;
    height: 56px;
    background: #ccc;
    border: 1px solid #bfbfbf;
    color: #838383;
}

/* project browser tree */
.browser { padding-bottom: 4px; }
.browser header { height: 50px; }
.tree, .tree ul {
    list-style: none;
}
.tree { margin-left: 20px; line-height: 44px; padding-top: 1px; }
.tree ul { margin-left: 50px; }
.tree li {
    background: repeating-linear-gradient(#888 0 1px, transparent 1px 3px) no-repeat 0 0 / 1px 100%;
}
.tree li:last-child { background-size: 1px 22px; }
.tree > li:last-child, .tree > li > ul > li:last-child { background-size: 1px 100%; }
.tree span {
    display: flex;
    align-items: center;
    height: 44px;
    white-space: nowrap;
}
.tree span::before {
    content: "";
    width: 32px;
    margin-right: 4px;
    border-top: 1px dotted #888;
}
.tree button {
    order: -1;
    width: 24px;
    height: 24px;
    margin-left: -12px;
    border: 2px solid #999;
    border-radius: 2px;
    background: #f6f6f6;
    color: #1e5591;
    font-weight: bold;
    line-height: 16px;
}
.tree span:has(button)::before { width: 20px; margin-right: 4px; }

/* drawing area */
.view {
    display: flex;
    flex-direction: column;
    flex: 1;
    min-width: 0;
    margin-left: 4px;
    background: #fff;
}
.doctabs {
    display: flex;
    height: 52px;
    flex: none;
    background: var(--chrome);
}
.doctab {
    display: flex;
    align-items: center;
    gap: 20px;
    width: 320px;
    padding: 2px 14px 0 12px;
}
.doctab svg {
    width: 40px;
    height: 38px;
}
.doctab .x {
    width: 24px;
    height: 24px;
    margin-left: auto;
}
.doctab.current {
    background: #fff;
    font-weight: bold;
}
.more {
    width: 24px;
    height: 24px;
    margin: 16px 12px 0 auto;
}
.stage {
    display: flex;
    flex: 1;
    min-height: 0;
}
.stage > .vscroll { margin: 5px 4px 0 0; }
.canvas {
    position: relative;
    flex: 1;
    min-width: 0;
}
#model {
    width: 100%;
    height: 100%;
}
.cube {
    position: absolute;
    top: 124px;
    right: 39px;
    width: 290px;
    height: 170px;
}
.cubetext {
    fill: #999b9d;
    font: bold 20px "Open Sans", sans-serif;
}
.cubetext .narrow { font-size: 13px; }
.cubetext .compass { font-size: 14px; fill: #bbb; }
.navbar {
    position: absolute;
    top: 356px;
    right: 1px;
    width: 78px;
    height: 267px;
}
.viewbar {
    display: flex;
    align-items: center;
    gap: 13px;
    height: 42px;
    flex: none;
    margin: 0 4px 5px;
    background: #efefef;
    color: #000;
}
.ratio {
    width: 188px;
    padding-left: 60px;
}
.hscroll {
    display: flex;
    align-items: center;
    flex: 1;
    height: 42px;
}
.hscroll svg {
    width: 24px;
    height: 24px;
}
.hscroll .bar {
    width: 42px;
    height: 42px;
    margin-left: 48%;
}
.back { transform: rotate(-90deg); }
.fwd { transform: rotate(90deg); margin-left: auto; }
.grip {
    width: 20px;
    height: 20px;
    margin: 14px 3px 0 12px;
}

/* model lines */
.top { fill: #b1a998; }
.dark { fill: #8d8a83; }
.light { fill: #c3bcae; }
.void { fill: #fff; }
.edge { stroke: #111; stroke-width: 1; vector-effect: non-scaling-stroke; }
.rail { fill: none; stroke: #111; stroke-width: 2; vector-effect: non-scaling-stroke; }
.level { fill: none; stroke: #111; stroke-width: 1; stroke-dasharray: 36 11 14 11; }
.level.far { stroke-dasharray: 54 15 21 15; stroke-dashoffset: 40; }
.gridline { fill: none; stroke: #111; stroke-width: 1; stroke-dasharray: 26 9 10 9; }
.head { fill: none; stroke: #0a3d91; }
.quarter { fill: #0a3d91; }
.leveltext { font: 10px "Liberation Sans", Arial, sans-serif; fill: #111; }
.tag { fill: #fff; }
.tagtext { font: 8px "Liberation Sans", Arial, sans-serif; fill: #333; }

/* status bar */
.status {
    display: flex;
    align-items: center;
    gap: 12px;
    height: 64px;
    flex: none;
    padding: 0 44px 8px 4px;
    color: #000;
}
.status p {
    flex: 0 0 1592px;
    padding-top: 8px;
}
.status select {
    width: 508px;
    height: 42px;
    border: 2px solid #e2e2e2;
    background-color: #fff;
    line-height: 32px;
}
.status select + .ico { margin-left: -4px; }
.status .option { color: #6d6d6d; padding-left: 2px; }
.count.low { padding-top: 14px; margin-right: -2px; }
.picks {
    display: flex;
    align-items: center;
    gap: 13px;
    margin-left: auto;
    color: #333;
}
.picks .count { margin-left: -10px; }

/* taskbar */
.taskbar {
    display: flex;
    flex: none;
    height: 100px;
    background: linear-gradient(#282727, #1e1d1c);
    color: #fff;
    font-size: 34px;
}
.start {
    width: 120px;
    display: grid;
    place-items: center;
}
.start svg {
    width: 40px;
    height: 40px;
}
.search {
    display: flex;
    align-items: center;
    gap: 32px;
    width: 860px;
    padding: 2px 30px 0;
    border: 3px solid #5b5c5e;
    background: #333;
}
.search svg {
    width: 48px;
    height: 48px;
}
.search input {
    flex: 1;
}
.search input::placeholder {
    color: #ddd;
    opacity: 1;
}
.apps {
    display: flex;
    gap: 4px;
}
.apps button {
    display: grid;
    place-items: center;
    width: 120px;
    border-bottom: 5px solid transparent;
    padding-top: 5px;
}
.apps svg {
    width: 60px;
    height: 60px;
}
.apps .run {
    background: linear-gradient(#76b9ed, #76b9ed) no-repeat center bottom / 100px 5px border-box;
}
.apps .focus {
    background: #4a4c4f;
    border-color: #76b9ed;
}
.tray {
    display: flex;
    align-items: center;
    gap: 38px;
    margin-left: auto;
    padding-right: 32px;
    border-right: 2px solid #555;
    margin-right: 10px;
}
.tray > svg {
    width: 44px;
    height: 44px;
}
.weather {
    display: flex;
    align-items: center;
    gap: 22px;
    margin-right: 8px;
    padding-top: 4px;
    font-size: 33px;
}
.weather svg {
    width: 60px;
    height: 44px;
}
.lang, .tray time {
    font-size: 28px;
}
.tray time {
    line-height: 46px;
    text-align: center;
    margin-right: 8px;
}
.notes svg {
    width: 60px;
    height: 60px;
}
.notes text {
    fill: #fff;
    font-size: 28px;
}

.watermark {
    position: absolute;
    left: 1688px;
    bottom: 40px;
    width: 462px;
    display: flex;
    flex-direction: column;
    align-items: center;
    pointer-events: none;
}
.watermark span {
    color: rgba(165, 168, 168, .3);
    font: bold 132px/140px "DejaVu Sans", sans-serif;
}
.watermark b {
    color: rgba(165, 168, 168, .55);
    font: bold 76px/80px "Liberation Sans", Arial, sans-serif;
}
```
FILE: model.js
```js
// Draws the structural model, its levels and its grids into #model.

var svg = document.getElementById('model');
var out = [];

function poly(pts, cls) {
    out.push('<polygon class="edge ' + cls + '" points="' + pts.map(function (p) { return p.join(','); }).join(' ') + '"/>');
}
function line(x1, y1, x2, y2, cls) {
    out.push('<path class="' + cls + '" d="M' + x1 + ' ' + y1 + 'L' + x2 + ' ' + y2 + '"/>');
}

// levels: name, elevation, y of the level head
var levels = [
    ['ROOF ROOM', '15750', 982], ['ROOF', '12750', 1102], ['Level  3', '8600', 1267],
    ['Level 2', '4600', 1427], ['FINISH', '600', 1586], ['Level 1', '0', 1610],
    ['R.C', '-1200', 1658], ['P.C.', '-1500', 1670]
];
levels.forEach(function (l) {
    var y = l[2];
    line(704, y - 2, 1499, y - 180, 'level');
    line(1499, y - 180, 3343, y - 3, 'level far');
    out.push('<path class="quarter" d="M695 ' + y + 'V' + (y - 16) + 'A9 16 0 0 1 704 ' + y + 'ZM695 ' + y + 'V' + (y + 16) + 'A9 16 0 0 1 686 ' + y + 'Z"/>');
    out.push('<ellipse class="head" cx="695" cy="' + y + '" rx="9" ry="16"/>');
    out.push('<text class="leveltext" x="712" y="' + (y - 14) + '" transform="rotate(-11 712 ' + (y - 14) + ')">' + l[0] + '</text>');
    out.push('<text class="leveltext" x="712" y="' + (y + 13) + '" transform="rotate(-11 712 ' + (y + 13) + ')">' + l[1] + '</text>');
});

// grid lines and bubbles
[[852, 1642], [926, 1625], [1000, 1609], [1127, 1580], [1170, 1570], [1211, 1561]].forEach(function (b) {
    out.push('<ellipse class="edge void" cx="' + b[0] + '" cy="' + b[1] + '" rx="25" ry="5"/>');
    line(b[0] + 26, b[1] + 2, b[0] + 1729, b[1] + 169, 'gridline');
});
[[2756, 1639], [2872, 1650], [2994, 1662]].forEach(function (b) {
    out.push('<ellipse class="edge void" cx="' + b[0] + '" cy="' + b[1] + '" rx="25" ry="5"/>');
    line(b[0] - 24, b[1] + 4, b[0] - 660, b[1] + 148, 'gridline');
});
[[1003, 1680], [1123, 1693], [1242, 1705], [1360, 1716], [1428, 1722], [1537, 1733], [1596, 1738], [1626, 1741], [1669, 1745],
 [1711, 1750], [1741, 1753], [1800, 1758], [1857, 1764], [1909, 1769], [1976, 1775], [2094, 1787], [2212, 1798], [2333, 1810]].forEach(function (g) {
    line(g[0], g[1], g[0] + 260, g[1] - 60, 'gridline');
});

// the building is drawn on its own grid, stretched to the view
out.push('<g transform="translate(1150 960) scale(.574 .5357)">');

function column(c, dy) {
    var x0 = c[0], xs = c[1], x1 = c[2], top = c[3] + dy, b = c[4] + dy;
    poly([[x0, top], [xs, top], [xs, b], [x0, b - (xs - x0) * .1]], 'dark');
    poly([[xs, top], [x1, top], [x1, b - (x1 - xs) * .25], [xs, b]], 'light');
}
function box(x, y, wd, wl, h) {
    var y1 = y + wd * .1, y2 = y1 - wl * .25;
    poly([[x, y], [x + wd, y1], [x + wd + wl, y2], [x + wl, y - wl * .25]], 'top');
    poly([[x, y], [x + wd, y1], [x + wd, y1 + h], [x, y + h]], 'dark');
    poly([[x + wd, y1], [x + wd + wl, y2], [x + wd + wl, y2 + h], [x + wd, y1 + h]], 'light');
}
function band(a, b, d0, d1, dy) {
    var up = b[1] < a[1];
    poly([[a[0], a[1] + d0 + dy], [b[0], b[1] + d0 + dy], [b[0], b[1] + d1 + dy], [a[0], a[1] + d1 + dy]], up ? 'light' : 'dark');
}

var outline = [
    [122, 193], [575, 84], [1505, 180], [1561, 167], [1711, 182], [1741, 176], [1905, 193], [1905, 201], [1880, 199],
    [2031, 215], [2031, 235], [1975, 229], [2905, 325], [2454, 435], [2036, 392], [1907, 423], [1704, 402],
    [1574, 434], [1248, 400], [1388, 366], [940, 320], [808, 355], [484, 320], [612, 289], [410, 268], [538, 237]
];
var edges = [
    [[122, 193], [538, 237]], [[410, 268], [612, 289]], [[484, 320], [808, 355]], [[808, 355], [940, 320]],
    [[940, 320], [1388, 366], true], [[1248, 400], [1574, 434]], [[1574, 434], [1704, 402]], [[1704, 402], [1907, 423]],
    [[1907, 423], [2036, 392]], [[2036, 392], [2454, 435]], [[2454, 435], [2905, 325]]
];
// left, corner, right, top, bottom
var inner = [
    [367, 369, 377, 230, 448], [758, 788, 790, 340, 495], [564, 584, 596, 300, 474], [951, 992, 1007, 330, 515],
    [1137, 1152, 1153, 330, 530], [1205, 1210, 1222, 330, 462], [1288, 1310, 1326, 390, 549], [1646, 1663, 1691, 400, 535],
    [1829, 1876, 1890, 400, 607], [1487, 1527, 1539, 400, 571], [832, 873, 884, 330, 583], [1405, 1420, 1450, 400, 635],
    [1984, 1996, 1998, 390, 525], [2046, 2066, 2087, 385, 627], [2264, 2273, 2294, 400, 649], [2477, 2489, 2499, 420, 670],
    [2693, 2694, 2705, 360, 615], [700, 745, 758, 330, 610], [1153, 1172, 1203, 335, 611], [1356, 1375, 1405, 400, 683],
    [1596, 1615, 1628, 415, 701], [1696, 1743, 1756, 395, 670]
];
// left, corner, right, top, foot at the footing
var front = [
    [122, 138, 161, 193, 1195], [320, 355, 367, 216, 1217], [410, 426, 453, 268, 1268], [484, 500, 523, 321, 1320],
    [902, 919, 950, 325, 1328], [792, 808, 832, 355, 1353], [1248, 1266, 1288, 401, 1405], [2865, 2882, 2905, 330, 1329],
    [2649, 2666, 2693, 383, 1382], [1997, 2014, 2046, 398, 1388], [1555, 1574, 1596, 434, 1433], [1890, 1907, 1935, 423, 1420],
    [2217, 2252, 2264, 413, 1412], [2434, 2454, 2477, 435, 1433]
];

// foundations
var chain = [
    [5, 1234], [375, 1273], [323, 1308], [430, 1320], [393, 1360], [1588, 1487], [1720, 1455], [1926, 1475],
    [2011, 1457], [2050, 1461], [2086, 1450], [2487, 1491], [3022, 1365]
];
poly(chain.concat([[2776, 1304], [1500, 1180], [600, 1060], [230, 1142]]), 'top');
chain.forEach(function (p, i) {
    if (i && p[0] > chain[i - 1][0]) {
        band(chain[i - 1], p, 0, 22, 0);
    }
});
box(230, 1146, 150, 90, 25);
box(220, 1190, 120, 130, 30);
for (var r = 0; r < 4; r++) {
    for (var x = 540 - r * 4; x < 2640 - r * 80; x += 118) {
        var base = 1310 + (x - 440) * .087 - 20 + r * 24;
        if (x > 1560) base -= 34;
        box(x + (r % 2) * 55, base - 40, 50 + (x * 7 + r * 13) % 38, 24, 26);
        box(x + 62 + (r % 2) * 30, base - 34, 12, 70, 18);
    }
}
[[523, 1342, 260], [834, 1372, 150], [1050, 1392, 150], [1290, 1415, 220], [1722, 1400, 120], [1930, 1408, 40], [2290, 1420, 95]].forEach(function (t) {
    box(t[0], t[1], t[2], 8, 30);
});
box(2490, 1408, 10, 160, 30);
box(2740, 1375, 10, 130, 30);
[[62, 1196, 90, 28, 38], [250, 1216, 122, 26, 36], [352, 1270, 88, 28, 38], [423, 1322, 90, 28, 38], [860, 1336, 70, 55, 28],
 [1022, 1340, 65, 14, 35], [724, 1356, 90, 24, 38], [980, 1380, 60, 14, 36], [1187, 1404, 90, 26, 36], [1956, 1396, 88, 60, 40],
 [2858, 1335, 38, 72, 38], [2623, 1394, 65, 110, 38], [1494, 1434, 87, 72, 36], [1831, 1425, 92, 70, 34],
 [2144, 1418, 122, 42, 38], [2376, 1440, 90, 70, 36]].forEach(function (f) {
    box.apply(null, f);
});
[[700, 745, 758, 1200, 1303], [1153, 1172, 1203, 1200, 1296], [1356, 1375, 1405, 1280, 1378], [1596, 1615, 1628, 1300, 1394],
 [1696, 1743, 1756, 1270, 1355]].forEach(function (c) {
    column(c, 0);
});

function shift(pts, dy) {
    return pts.map(function (p) { return [p[0], p[1] + dy]; });
}

// flight going up to the right, with its stepped side and railing
function flight(dy) {
    poly([[523, 560 + dy], [640, 380 + dy], [676, 386 + dy], [548, 566 + dy], [523, 572 + dy]], 'dark');
    for (var i = 0; i < 9; i++) {
        var x = 518 + i * 11, y = 500 - i * 15 + dy;
        line(x, y, x, y - 62, 'rail');
        line(x, y, x + 11, y, 'rail');
        line(x - 4, y - i - 6, x + 14, y - 30, 'rail');
    }
    for (var k = 0; k < 6; k++) {
        line(518, 494 - k * 11 + dy, 606, 392 - k * 3 + dy, 'rail');
    }
    for (var m = 0; m < 3; m++) {
        line(478 + m * 3, 488 + dy, 478 + m * 3, 575 + dy, 'rail');
    }
}

poly(shift(outline, 905), 'top');
edges.forEach(function (e) { band(e[0], e[1], 0, 8, 905); });
front.forEach(function (c) {
    column([c[0], c[1], c[2], c[3] + 915, c[4]], 0);
});

[596, 298, 0].forEach(function (dy, n) {
    inner.slice(0, 10).forEach(function (c) { column(c, dy); });
    if (n === 1) {
        poly(shift([[615, 392], [640, 392], [702, 480], [702, 512]], dy), 'dark');
    } else {
        flight(dy);
    }
    if (n === 2) {
        for (var q = 0; q < 7; q++) {
            line(545 + q * 8, 580, 560 + q * 12, 530, 'rail');
            line(598, 487 + q * 14, 680 - q * 4, 600, 'rail');
            line(550 + q * 18, 556 - q, 550 + q * 18, 595, 'rail');
        }
        line(525, 588, 700, 604, 'rail');
    }
    inner.slice(10).forEach(function (c) { column(c, dy); });
    if (n === 1) {
        for (var i = 0; i < 6; i++) {
            line(636 + i * 12, 398 + dy, 700, 480 - i * 12 + dy, 'rail');
            line(640 + i * 10, 398 + i * 12 + dy, 640 + i * 10, 430 + i * 12 + dy, 'rail');
            line(756 + i * 6, 410 + dy, 792, 480 - i * 14 + dy, 'rail');
            line(756, 526 + i * 13 + dy, 866, 510 + i * 13 + dy, 'rail');
            line(640 + i * 10, 600 + dy, 698, 535 + i * 10 + dy, 'rail');
        }
        for (var j = 0; j < 6; j++) {
            line(760 + j * 21, 522 - j * 3 + dy, 760 + j * 21, 598 - j * 4 + dy, 'rail');
        }
    }
    var t = n === 2 ? 0 : dy + 11;
    edges.forEach(function (e) {
        band(e[0], e[1], e[2] ? 3 : 14, e[2] ? 60 : 52, t);
    });
    front.forEach(function (c) {
        column([c[0], c[1], c[2], c[3] + 12, c[3] + 309], dy);
    });
    poly(shift(outline, t), 'top');
    edges.forEach(function (e) { band(e[0], e[1], 0, e[2] ? 4 : 14, t); });
});

// stair opening in the roof
poly([[480, 272], [602, 240], [884, 268], [745, 300], [612, 287]], 'top');
poly([[602, 240], [884, 268], [770, 296], [740, 282], [690, 292], [556, 272], [556, 260]], 'dark');
poly([[480, 272], [602, 240], [602, 250], [520, 274]], 'light');
for (var s = 0; s < 6; s++) {
    line(632 + s * 10, 288, 692, 203 + s * 14, 'rail');
    line(690 + s * 8, 280, 740, 192 + s * 14, 'rail');
}
line(692, 203, 692, 290, 'rail');
line(740, 192, 740, 298, 'rail');
line(655, 255, 655, 288, 'rail');
line(702, 245, 702, 288, 'rail');
out.push('</g>');

// grid heads lying on the ground floor
[[1285, 1545, 'D'], [1253, 1552, 'E'], [1664, 1533, '20'], [1783, 1544, '19'], [1901, 1556, '18'], [2019, 1567, '16'], [2087, 1574, '15'],
 [2137, 1579, '14'], [2197, 1584, '13'], [2255, 1590, '12'], [2284, 1593, '11'], [2327, 1597, '10'], [2372, 1601, '9'],
 [2399, 1604, '8'], [2459, 1610, '7'], [2517, 1615, '6'], [2567, 1620, '5'], [2635, 1627, '4']].forEach(function (g) {
    var w = g[0] < 2350 ? 14 : 10;
    out.push('<path class="tag" d="M' + (g[0] - w - 4) + ' ' + (g[1] + 4) + 'L' + (g[0] - 6) + ' ' + (g[1] - 3) + 'H' + (g[0] + w + 4) + 'L' + (g[0] + 6) + ' ' + (g[1] + 4) + 'Z"/>');
    out.push('<text class="tagtext" text-anchor="middle" x="' + g[0] + '" y="' + (g[1] + 3) + '">' + g[2] + '</text>');
});

svg.innerHTML = out.join('');
```
